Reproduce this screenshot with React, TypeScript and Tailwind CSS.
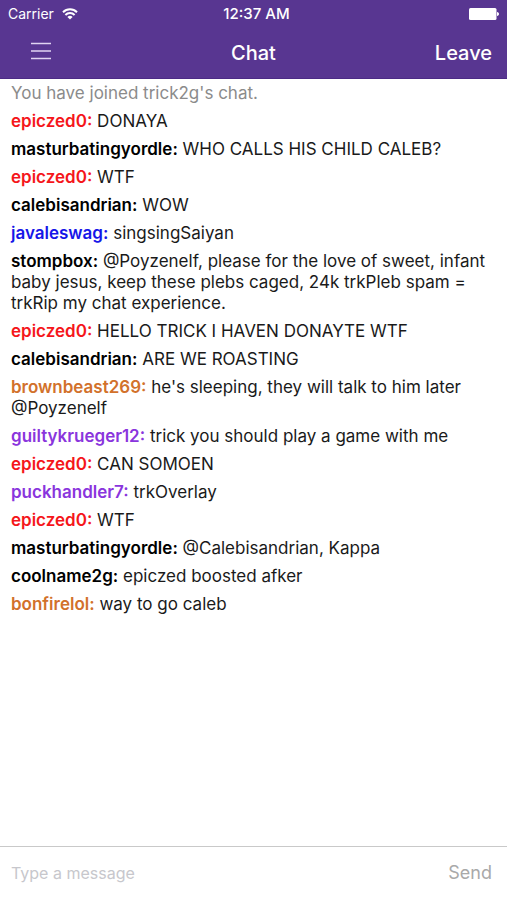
import { useState } from 'react';
import type { FormEvent } from 'react';

type Message = {
  user: string;
  color: string;
  text: string;
};

const MESSAGES: Message[] = [
  { user: 'epiczed0', color: 'text-[#f5161b]', text: 'DONAYA' },
  { user: 'masturbatingyordle', color: 'text-black', text: 'WHO CALLS HIS CHILD CALEB?' },
  { user: 'epiczed0', color: 'text-[#f5161b]', text: 'WTF' },
  { user: 'calebisandrian', color: 'text-black', text: 'WOW' },
  { user: 'javaleswag', color: 'text-[#1616e8]', text: 'singsingSaiyan' },
  {
    user: 'stompbox',
    color: 'text-black',
    text: '@Poyzenelf, please for the love of sweet, infant baby jesus, keep these plebs caged, 24k trkPleb spam = trkRip my chat experience.',
  },
  { user: 'epiczed0', color: 'text-[#f5161b]', text: 'HELLO TRICK I HAVEN DONAYTE WTF' },
  { user: 'calebisandrian', color: 'text-black', text: 'ARE WE ROASTING' },
  {
    user: 'brownbeast269',
    color: 'text-[#d2712b]',
    text: "he's sleeping, they will talk to him later @Poyzenelf",
  },
  { user: 'guiltykrueger12', color: 'text-[#8a35dd]', text: 'trick you should play a game with me' },
  { user: 'epiczed0', color: 'text-[#f5161b]', text: 'CAN SOMOEN' },
  { user: 'puckhandler7', color: 'text-[#8a35dd]', text: 'trkOverlay' },
  { user: 'epiczed0', color: 'text-[#f5161b]', text: 'WTF' },
  { user: 'masturbatingyordle', color: 'text-black', text: '@Calebisandrian, Kappa' },
  { user: 'coolname2g', color: 'text-black', text: 'epiczed boosted afker' },
  { user: 'bonfirelol', color: 'text-[#d2712b]', text: 'way to go caleb' },
];

function WifiIcon() {
  return (
    <svg viewBox="0 0 16 12" className="h-3 w-4" fill="none" stroke="currentColor" strokeWidth="2">
      <path d="M1 4.2a10 10 0 0 1 14 0" />
      <path d="M3.4 7a6.4 6.4 0 0 1 9.2 0" />
      <path d="M8 11.6 5.4 9a3.6 3.6 0 0 1 5.2 0z" fill="currentColor" stroke="none" />
    </svg>
  );
}

function BatteryIcon() {
  return (
    <svg viewBox="0 0 30 12" className="h-3 w-[30px]" fill="currentColor">
      <rect width="27.5" height="12" rx="1.5" />
      <path d="M28 4c1.3.3 2 1.1 2 2s-.7 1.7-2 2z" />
    </svg>
  );
}

function MenuIcon() {
  return (
    <svg viewBox="0 0 20 18" className="h-[18px] w-5" stroke="currentColor" strokeWidth="1.6">
      <path d="M0 1.5h20M0 9h20M0 16.5h20" />
    </svg>
  );
}

function StatusBar() {
  return (
    <div className="grid h-7 grid-cols-3 items-center px-2 text-sm">
      <div className="flex items-center gap-2">
        <span>Carrier</span>
        <WifiIcon />
      </div>
      <time className="pl-1.5 text-center text-[15px] font-medium">12:37 AM</time>
      <div className="flex justify-end">
        <BatteryIcon />
      </div>
    </div>
  );
}

export default function App() {
  const [messages, setMessages] = useState(MESSAGES);
  const [draft, setDraft] = useState('');

  const send = (e: FormEvent) => {
    e.preventDefault();
    if (!draft.trim()) return;
    setMessages([...messages, { user: 'me', color: 'text-black', text: draft.trim() }]);
    setDraft('');
  };

  return (
    <div className="flex min-h-screen flex-col bg-white font-['Inter',sans-serif] text-black">
      <header className="border-b border-[#4c2b85] bg-[#583691] text-white">
        <StatusBar />
        <nav className="grid h-[50px] grid-cols-3 items-center px-[15px] text-xl font-medium">
          <button type="button" aria-label="Menu" className="justify-self-start px-4 pb-1 text-[#e0d4f2]">
            <MenuIcon />
          </button>
          <h1 className="text-center">Chat</h1>
          <button type="button" className="justify-self-end">
            Leave
          </button>
        </nav>
      </header>

      <main className="flex-1 px-[11px] pt-1 text-[17px] leading-[21px]">
        <p className="text-[#8b8b8b]">You have joined trick2g&apos;s chat.</p>
        <ul>
          {messages.map((m, i) => (
            <li key={i} className="mt-[7px] text-[#1a1a1a]">
              <span className={`font-semibold ${m.color}`}>{m.user}:</span> {m.text}
            </li>
          ))}
        </ul>
      </main>

      <form
        onSubmit={send}
        className="flex h-[54px] items-center border-t border-[#c9c9c9] pr-[15px] pb-0.5 pl-[11px]"
      >
        <input
          type="text"
          aria-label="Message"
          placeholder="Type a message"
          value={draft}
          onChange={(e) => setDraft(e.target.value)}
          className="min-w-0 flex-1 text-base outline-none placeholder:text-[#c7c7cc]"
        />
        <button type="submit" className="text-lg text-[#a9a9a9]">
          Send
        </button>
      </form>
    </div>
  );
}
